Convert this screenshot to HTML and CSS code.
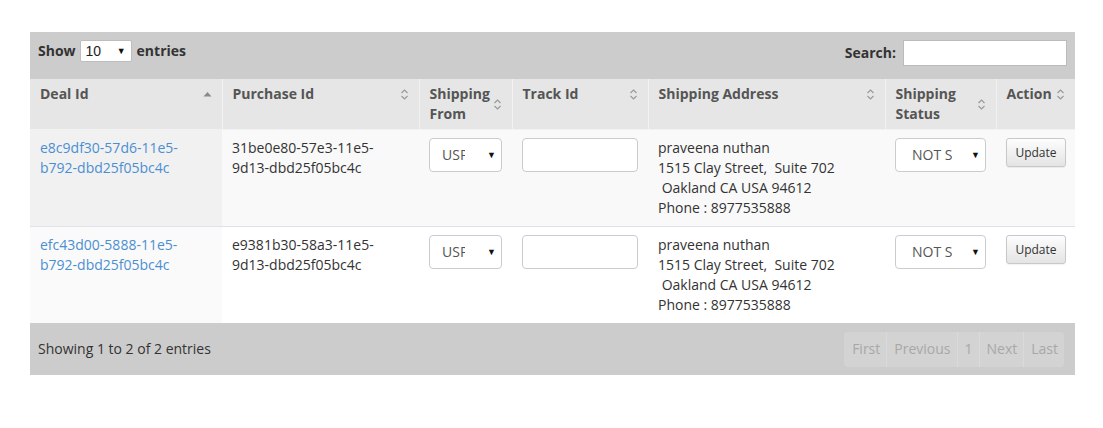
FILE: index.html
```html
<!DOCTYPE html>
<html>
<head>
<meta charset="utf-8">
<link rel="stylesheet" href="styles.css">
</head>
<body>
<div class="wrap">
  <div class="topbar">
    <div class="length">
      <span class="lbl">Show</span>
      <div class="sel small"><span class="val">10</span><span class="caret">▼</span></div>
      <span class="lbl">entries</span>
    </div>
    <div class="search">
      <span class="lbl">Search:</span>
      <div class="search-input"></div>
    </div>
  </div>
  <table class="grid">
    <colgroup>
      <col class="c1"><col class="c2"><col class="c3"><col class="c4"><col class="c5"><col class="c6"><col class="c7">
    </colgroup>
    <thead>
      <tr>
        <th><div class="th"><span>Deal Id</span><svg class="ico" width="9" height="6" viewBox="0 0 9 6"><path d="M0.5 5.5 L4.5 1 L8.5 5.5 Z" fill="#8a8a8a"/></svg></div></th>
        <th><div class="th"><span>Purchase Id</span><svg class="ico" width="9" height="11" viewBox="0 0 9 11"><path d="M1.5 4 L4.5 1 L7.5 4 M1.5 7 L4.5 10 L7.5 7" fill="none" stroke="#9a9a9a" stroke-width="1.2"/></svg></div></th>
        <th><div class="th"><span>Shipping<br>From</span><svg class="ico" width="9" height="11" viewBox="0 0 9 11"><path d="M1.5 4 L4.5 1 L7.5 4 M1.5 7 L4.5 10 L7.5 7" fill="none" stroke="#9a9a9a" stroke-width="1.2"/></svg></div></th>
        <th><div class="th"><span>Track Id</span><svg class="ico" width="9" height="11" viewBox="0 0 9 11"><path d="M1.5 4 L4.5 1 L7.5 4 M1.5 7 L4.5 10 L7.5 7" fill="none" stroke="#9a9a9a" stroke-width="1.2"/></svg></div></th>
        <th><div class="th"><span>Shipping Address</span><svg class="ico" width="9" height="11" viewBox="0 0 9 11"><path d="M1.5 4 L4.5 1 L7.5 4 M1.5 7 L4.5 10 L7.5 7" fill="none" stroke="#9a9a9a" stroke-width="1.2"/></svg></div></th>
        <th><div class="th"><span>Shipping<br>Status</span><svg class="ico" width="9" height="11" viewBox="0 0 9 11"><path d="M1.5 4 L4.5 1 L7.5 4 M1.5 7 L4.5 10 L7.5 7" fill="none" stroke="#9a9a9a" stroke-width="1.2"/></svg></div></th>
        <th class="act"><div class="th tight"><span>Action</span><svg class="ico" width="9" height="11" viewBox="0 0 9 11"><path d="M1.5 4 L4.5 1 L7.5 4 M1.5 7 L4.5 10 L7.5 7" fill="none" stroke="#9a9a9a" stroke-width="1.2"/></svg></div></th>
      </tr>
    </thead>
    <tbody>
      <tr class="odd">
        <td class="sorted"><a href="#">e8c9df30-57d6-11e5-<br>b792-dbd25f05bc4c</a></td>
        <td>31be0e80-57e3-11e5-<br>9d13-dbd25f05bc4c</td>
        <td><div class="sel from"><span class="val">USP</span><span class="caret">▼</span></div></td>
        <td><div class="txt"></div></td>
        <td>praveena nuthan<br>1515 Clay Street,&nbsp; Suite 702<br>&nbsp;Oakland CA USA 94612<br>Phone : 8977535888</td>
        <td><div class="sel status"><span class="val">NOT SHIPPED</span><span class="caret">▼</span></div></td>
        <td><button class="btn">Update</button></td>
      </tr>
      <tr class="even">
        <td class="sorted"><a href="#">efc43d00-5888-11e5-<br>b792-dbd25f05bc4c</a></td>
        <td>e9381b30-58a3-11e5-<br>9d13-dbd25f05bc4c</td>
        <td><div class="sel from"><span class="val">USP</span><span class="caret">▼</span></div></td>
        <td><div class="txt"></div></td>
        <td>praveena nuthan<br>1515 Clay Street,&nbsp; Suite 702<br>&nbsp;Oakland CA USA 94612<br>Phone : 8977535888</td>
        <td><div class="sel status"><span class="val">NOT SHIPPED</span><span class="caret">▼</span></div></td>
        <td><button class="btn">Update</button></td>
      </tr>
    </tbody>
  </table>
  <div class="footer">
    <div class="info">Showing 1 to 2 of 2 entries</div>
    <div class="pager">
      <span class="pg">First</span><span class="pg">Previous</span><span class="pg">1</span><span class="pg">Next</span><span class="pg">Last</span>
    </div>
  </div>
</div>
</body>
</html>
```

FILE: styles.css
```css
html, body {
  margin: 0;
  padding: 0;
  background: #ffffff;
}
body {
  font-family: "Open Sans", "Liberation Sans", sans-serif;
  font-size: 14px;
  line-height: 20px;
  color: #333333;
}
.wrap {
  width: 1045px;
  margin: 32px 0 0 30px;
}
.topbar {
  height: 47px;
  background: #cccccc;
  display: flex;
  align-items: flex-start;
  justify-content: space-between;
  padding: 8px 8px 0 8px;
  box-sizing: border-box;
}
.length, .search {
  display: flex;
  align-items: center;
}
.length {
  height: 22px;
}
.lbl {
  font-weight: 700;
  color: #333;
}
.sel {
  position: relative;
  display: flex;
  align-items: center;
  background: #fff;
  box-sizing: border-box;
  color: #555;
}
.sel .caret {
  position: absolute;
  font-size: 9px;
  color: #111;
  line-height: 10px;
}
.sel.small {
  width: 52px;
  height: 22px;
  margin: 0 5px 0 4px;
  border: 1px solid #bdbdbd;
  border-radius: 2px;
  font-family: "Liberation Sans", Arial, sans-serif;
  font-size: 14px;
  color: #222;
}
.sel.small .val {
  padding-left: 5px;
}
.sel.small .caret {
  right: 5px;
  top: 5px;
}
.search-input {
  width: 164px;
  height: 26px;
  margin-left: 7px;
  background: #fff;
  border: 1px solid #bbbbbb;
  box-sizing: border-box;
}
.grid {
  width: 1045px;
  border-collapse: collapse;
  table-layout: fixed;
}
.c1 { width: 192px; }
.c2 { width: 197px; }
.c3 { width: 93px; }
.c4 { width: 136px; }
.c5 { width: 237px; }
.c6 { width: 111px; }
.c7 { width: 79px; }
thead th {
  background: #e6e6e6;
  text-align: left;
  font-weight: 700;
  color: #555555;
  padding: 5px 10px 5px 10px;
  border-left: 1px solid #f2f2f2;
  border-bottom: 1px solid #f2f2f2;
  vertical-align: top;
}
thead th:first-child {
  border-left: none;
}
thead th.act {
  padding-right: 6px;
}
.th {
  display: flex;
  align-items: center;
  justify-content: space-between;
}
.th.tight {
  justify-content: flex-start;
  gap: 4px;
}
.ico {
  display: block;
  flex: none;
}
tbody td {
  padding: 8px 10px 8px 10px;
  vertical-align: top;
  border-bottom: 1px solid #dde3e8;
}
tbody tr.odd td {
  background: #f9f9f9;
}
tbody tr.odd td.sorted {
  background: #f1f1f1;
}
tbody tr.even td {
  background: #ffffff;
  border-bottom: none;
}
tbody tr.even td.sorted {
  background: #fafafa;
}
a {
  color: #4b8fd1;
  text-decoration: none;
}
.sel.from, .sel.status {
  height: 34px;
  border: 1px solid #cccccc;
  border-radius: 4px;
  white-space: nowrap;
  overflow: hidden;
}
.sel.from {
  width: 73px;
}
.sel.from .val {
  display: block;
  width: 23px;
  margin-left: 12px;
  overflow: hidden;
}
.sel.status {
  width: 91px;
}
.sel.status .val {
  display: block;
  width: 40px;
  margin-left: 16px;
  overflow: hidden;
}
.sel.from .caret, .sel.status .caret {
  right: 5px;
  top: 11px;
}
.txt {
  width: 116px;
  height: 34px;
  border: 1px solid #cccccc;
  border-radius: 4px;
  background: #fff;
  box-sizing: border-box;
}
.btn {
  display: block;
  width: 60px;
  height: 29px;
  padding: 0;
  font-family: "Open Sans", "Liberation Sans", sans-serif;
  font-size: 12px;
  color: #333;
  border: 1px solid #c8c8c8;
  border-radius: 3px;
  background: linear-gradient(#fdfdfd, #e4e4e4);
  box-shadow: 0 1px 1px rgba(0,0,0,0.06);
}
.footer {
  height: 52px;
  background: #cccccc;
  display: flex;
  align-items: center;
  justify-content: space-between;
  padding: 0 11px 0 8px;
  box-sizing: border-box;
}
.info {
  color: #333;
}
.pager {
  display: flex;
  background: #d3d3d3;
  border-radius: 4px;
  overflow: hidden;
  margin-top: 1px;
}
.pg {
  color: #a8a8a8;
  padding: 7px 6px 8px 7px;
  border-left: 1px solid #dadada;
}
.pg:first-child {
  border-left: none;
  padding-left: 8px;
}
```
